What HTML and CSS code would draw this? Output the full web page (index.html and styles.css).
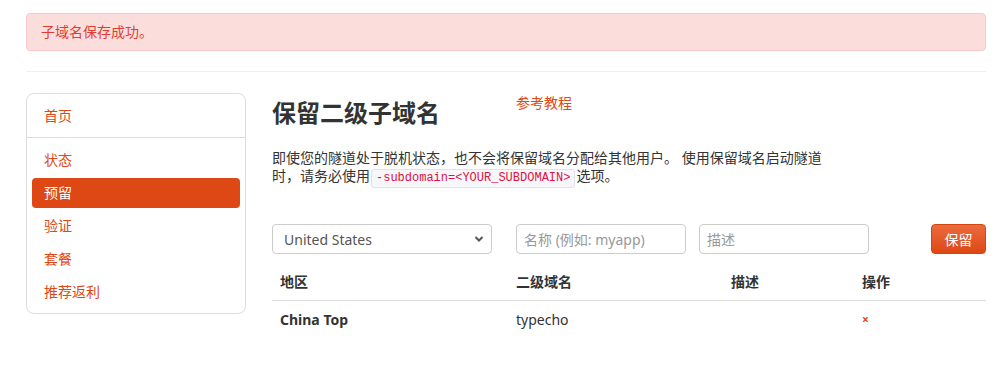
FILE: index.html
```html
<!DOCTYPE html>
<html lang="zh-CN">
  <head>
    <meta charset="UTF-8" />
    <meta name="viewport" content="width=device-width, initial-scale=1.0" />
    <title>保留二级子域名</title>
    <link rel="stylesheet" href="styles.css">
  </head>
  <body>
    <div class="container">
      <div class="alert">子域名保存成功。</div>
      <hr class="divider" />

      <div class="row">
        <div class="sidebar">
          <ul class="nav-list">
            <li><a href="#">首页</a></li>
            <li class="nav-divider"></li>
            <li><a href="#">状态</a></li>
            <li class="active"><a href="#">预留</a></li>
            <li><a href="#">验证</a></li>
            <li><a href="#">套餐</a></li>
            <li><a href="#">推荐返利</a></li>
          </ul>
        </div>

        <div class="main">
          <div class="title-row">
            <h2 class="page-title">保留二级子域名</h2>
            <a class="help-link" href="#">参考教程</a>
          </div>
          <p class="intro">
            即使您的隧道处于脱机状态，也不会将保留域名分配给其他用户。 使用保留域名启动隧道时，请务必使用<code>-subdomain=&lt;YOUR_SUBDOMAIN&gt;</code>选项。
          </p>

          <!-- reserve form -->
          <div class="reserve-form">
            <div class="select-wrap">
              <select class="region-select">
                <option>United States</option>
                <option>China Top</option>
              </select>
              <svg class="chevron" width="10" height="8" viewBox="0 0 10 8">
                <path d="M1.5 2 L5 5.5 L8.5 2" fill="none" stroke="#555" stroke-width="2" />
              </svg>
            </div>
            <input type="text" class="field field-name" placeholder="名称 (例如: myapp)" />
            <input type="text" class="field" placeholder="描述" />
            <button class="btn-reserve">保留</button>
          </div>

          <table class="domain-table">
            <thead>
              <tr>
                <th class="col-region">地区</th>
                <th class="col-name">二级域名</th>
                <th class="col-desc">描述</th>
                <th>操作</th>
              </tr>
            </thead>
            <tbody>
              <tr>
                <td class="region-name">China Top</td>
                <td>typecho</td>
                <td></td>
                <td><a class="delete-link" href="#">×</a></td>
              </tr>
            </tbody>
          </table>
        </div>
      </div>
    </div>
  </body>
</html>
```

FILE: styles.css
```css
body {
  font-family: "Noto Sans", "Noto Sans CJK SC", sans-serif;
  font-size: 14px;
  line-height: 20px;
  color: #333;
  background-color: #fff;
  margin: 0;
  padding: 0;
}

.container {
  width: 960px;
  margin-left: 26px;
  padding-top: 13px;
}

.alert {
  padding: 8px 35px 8px 14px;
  margin-bottom: 20px;
  background-color: #fbdedc;
  border: 1px solid #f6cacb;
  border-radius: 4px;
  color: #df3d32;
}

.divider {
  margin: 0 0 20px;
  border: 0;
  border-top: 1px solid #eee;
  border-bottom: 1px solid #fff;
}

.row {
  display: flex;
  align-items: flex-start;
}

.sidebar {
  width: 220px;
  margin-right: 26px;
}

.nav-list {
  list-style: none;
  margin: 0;
  padding: 7px 5px 6px;
  border: 1px solid #ddd;
  border-radius: 8px;
  display: flex;
  flex-direction: column;
  gap: 3px;
}

.nav-list li a {
  display: block;
  height: 30px;
  line-height: 30px;
  padding: 0 12px;
  color: #dd4814;
  text-decoration: none;
  border-radius: 4px;
}

.nav-list li.active a {
  background-color: #dd4814;
  color: #fff;
}

.nav-list .nav-divider {
  height: 1px;
  margin: 3px -5px 4px;
  background-color: #ddd;
}

.main {
  flex: 1;
}

.title-row {
  display: flex;
  align-items: flex-start;
}

.page-title {
  width: 244px;
  margin: 0;
  padding-top: 5px;
  font-size: 24px;
  line-height: 30px;
  font-weight: 700;
  color: #333;
}

.help-link {
  color: #dd4814;
  text-decoration: none;
}

.intro {
  max-width: 560px;
  margin: 21px 0 0;
  line-height: 18px;
}

code {
  display: inline-block;
  padding: 1px 4px;
  margin: 0 1px;
  font-family: "Liberation Mono", monospace;
  font-size: 12px;
  line-height: 15px;
  vertical-align: 0;
  color: #d14;
  background-color: #f7f7f9;
  border: 1px solid #e1e1e8;
  border-radius: 3px;
}

.reserve-form {
  display: flex;
  align-items: center;
  margin-top: 36px;
}

.select-wrap {
  position: relative;
  margin-right: 24px;
}

.region-select {
  appearance: none;
  width: 220px;
  height: 30px;
  padding: 0 11px;
  font-family: "Noto Sans", "Noto Sans CJK SC", sans-serif;
  font-size: 14px;
  color: #555;
  background-color: #fff;
  border: 1px solid #ccc;
  border-radius: 4px;
}

.chevron {
  position: absolute;
  right: 8px;
  top: 11px;
  pointer-events: none;
}

.field {
  width: 170px;
  height: 30px;
  box-sizing: border-box;
  padding: 4px 7px;
  font-family: "Noto Sans", "Noto Sans CJK SC", sans-serif;
  font-size: 14px;
  color: #555;
  border: 1px solid #ccc;
  border-radius: 4px;
}

.field::placeholder {
  color: #999;
}

.field-name {
  margin-right: 13px;
}

.btn-reserve {
  margin-left: auto;
  width: 55px;
  height: 30px;
  padding: 0;
  font-family: "Noto Sans", "Noto Sans CJK SC", sans-serif;
  font-size: 14px;
  color: #fff;
  background-image: linear-gradient(#eb6b3e, #dd4814);
  border: 1px solid #d5450f;
  border-radius: 4px;
  cursor: pointer;
}

.domain-table {
  width: 100%;
  margin-top: 10px;
  border-collapse: collapse;
}

.domain-table th,
.domain-table td {
  padding: 8px;
  line-height: 20px;
  text-align: left;
}

.domain-table th {
  font-weight: 700;
  border-bottom: 1px solid #ddd;
}

.col-region {
  width: 220px;
}

.col-name {
  width: 199px;
}

.col-desc {
  width: 115px;
}

.region-name {
  font-weight: 700;
}

.delete-link {
  color: #dd4814;
  font-size: 12px;
  font-weight: 700;
  text-decoration: none;
}
```
